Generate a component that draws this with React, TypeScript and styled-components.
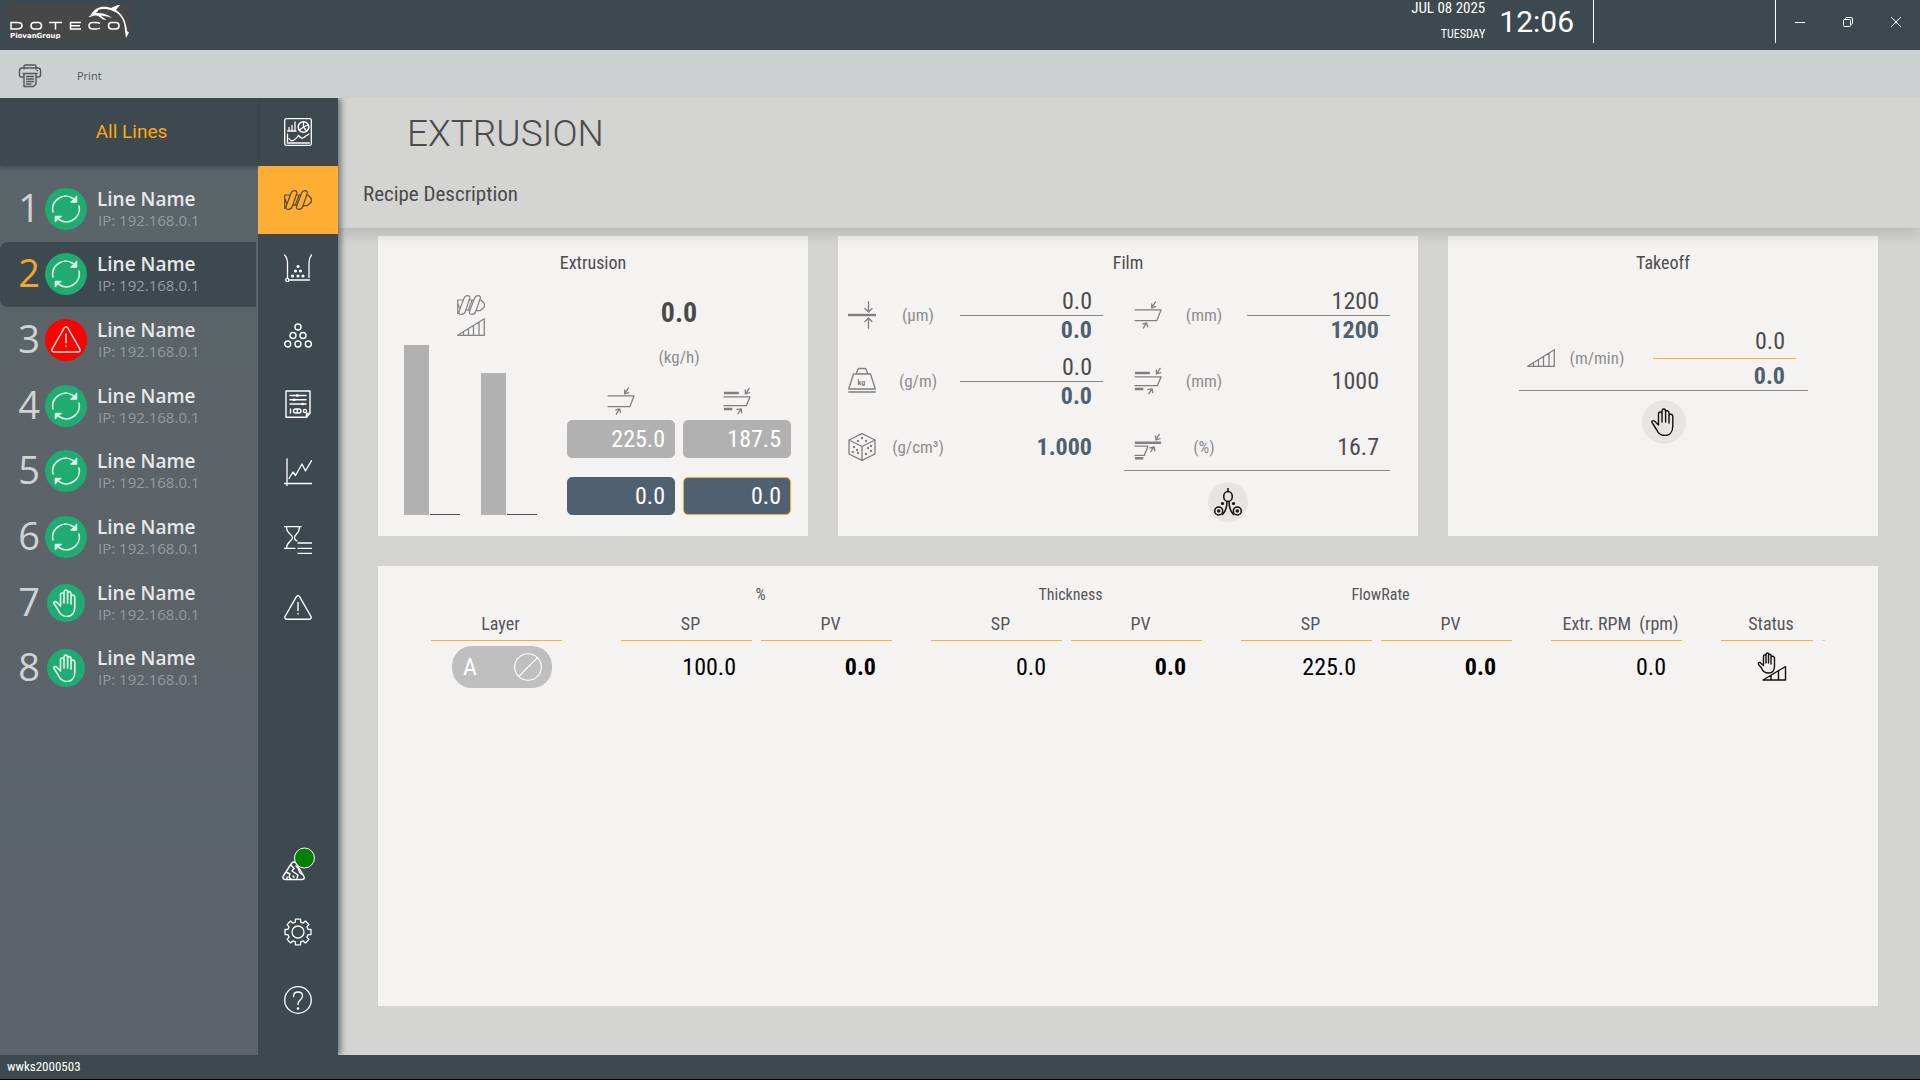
import React from "react";
import styled, { createGlobalStyle } from "styled-components";

const color = {
  dark: "#3d494e",
  accent: "#ffad33",
  page: "#d4d4d2",
  card: "#f5f3f2",
  text: "#4b4b4d",
  muted: "#8c8d90",
  steel: "#4f6071",
  bar: "#b1b1b1",
};

const condensed = `"Roboto Condensed", Roboto, "Liberation Sans", sans-serif`;
const regular = `Roboto, "Liberation Sans", sans-serif`;
const humanist = `"Open Sans", "Noto Sans", sans-serif`;

const GlobalStyle = createGlobalStyle`
  * { box-sizing: border-box; }
  body { margin: 0; background: ${color.page}; }
  button, input { font: inherit; color: inherit; }
  button { padding: 0; border: 0; background: none; cursor: pointer; }
  h1, h2, p, ul { margin: 0; padding: 0; font-weight: 400; }
  ul { list-style: none; }
  svg { display: block; flex: none; }
`;

const Shell = styled.div`
  display: flex;
  flex-direction: column;
  min-height: 100vh;
  font-family: ${condensed};
  color: ${color.text};
`;

/* ---------- title bar ---------- */

const TitleBar = styled.header`
  display: flex;
  justify-content: space-between;
  height: 50px;
  padding-left: 10px;
  background: ${color.dark};
  color: #fff;
`;

const Logo = styled.div`
  width: 120px;
  height: 35px;
  margin-top: 4px;
  background: #474747;
`;

const TitleRight = styled.div`
  display: flex;
  align-items: flex-start;
`;

const DateBlock = styled.div`
  display: flex;
  flex-direction: column;
  gap: 10px;
  text-align: right;
  font-size: 15px;
  line-height: 16px;
`;

const Weekday = styled.span`
  font-size: 12px;
`;

const Clock = styled.time`
  padding: 0 19px 0 14px;
  font-family: ${regular};
  font-size: 30px;
  line-height: 44px;
`;

const TitleSlot = styled.div`
  width: 183px;
  height: 43px;
  border: solid #fff;
  border-width: 0 1px;
`;

const WindowButton = styled.button`
  display: flex;
  align-items: center;
  justify-content: center;
  width: 48px;
  height: 44px;
`;

/* ---------- toolbar ---------- */

const Toolbar = styled.div`
  display: flex;
  align-items: center;
  height: 48px;
  padding: 4px 0 0 18px;
  background: #cbd0d0;
`;

const PrintButton = styled.button`
  display: flex;
  align-items: center;
  gap: 35px;
  color: #55565a;
  font-family: ${humanist};
  font-size: 11px;
  line-height: 16px;
`;

/* ---------- body ---------- */

const Body = styled.div`
  display: flex;
  flex: 1;
  overflow: hidden;
`;

const Sidebar = styled.aside`
  position: relative;
  z-index: 3;
  width: 258px;
  background: linear-gradient(#5b6468, #5c636b);
`;

const SidebarTitle = styled.h2`
  padding-left: 5px;
  background: ${color.dark};
  box-shadow: 0 2px 3px rgba(40, 50, 56, 0.4);
  color: #ffa70f;
  font-family: ${regular};
  font-size: 19px;
  line-height: 68px;
  text-align: center;
`;

const LineList = styled.ul`
  display: grid;
  grid-template-rows: repeat(8, 1fr);
  height: 525px;
  margin: 10px 2px 0 0;
`;

const LineButton = styled.button<{ $selected?: boolean }>`
  display: grid;
  grid-template-columns: 45px 42px 1fr;
  align-items: center;
  width: 100%;
  height: 100%;
  border-radius: 8px 0 0 8px;
  background: ${(p) => (p.$selected ? color.dark : "transparent")};
  font-family: ${humanist};
  text-align: left;
`;

const LineNumber = styled.span<{ $selected?: boolean }>`
  padding: 0 5px 4px 0;
  color: ${(p) => (p.$selected ? "#f0a532" : "#d0d2d3")};
  font-size: 38px;
  line-height: 44px;
  text-align: right;
`;

const StateDisc = styled.span<{ $kind: LineState }>`
  display: flex;
  align-items: center;
  justify-content: center;
  justify-self: center;
  width: ${(p) => (p.$kind === "manual" ? 38 : 42)}px;
  height: ${(p) => (p.$kind === "manual" ? 38 : 42)}px;
  border-radius: 50%;
  background: ${(p) => (p.$kind === "alarm" ? "#fe0000" : "#20ab72")};
  color: #d9f0e5;
`;

const LineText = styled.span`
  display: flex;
  flex-direction: column;
  padding-left: 10px;
  color: #e6e8e9;
  font-size: 19px;
  font-weight: 600;
  line-height: 22px;
`;

const LineAddress = styled.span`
  padding-left: 1px;
  color: #959b9e;
  font-size: 15px;
  font-weight: 400;
  line-height: 20px;
`;

const Rail = styled.nav`
  position: relative;
  z-index: 2;
  display: flex;
  flex-direction: column;
  justify-content: space-between;
  width: 80px;
  padding-bottom: 21px;
  background: ${color.dark};
  box-shadow: 3px 0 6px rgba(0, 0, 0, 0.45);
`;

const RailButton = styled.button<{ $active?: boolean }>`
  display: flex;
  align-items: center;
  justify-content: center;
  width: 80px;
  height: 68px;
  background: ${(p) => (p.$active ? color.accent : "transparent")};
  color: ${(p) => (p.$active ? "#5a4a35" : "#fff")};
`;

/* ---------- page ---------- */

const Main = styled.main`
  flex: 1;
  min-width: 0;
`;

const PageHeader = styled.div`
  position: relative;
  z-index: 1;
  height: 130px;
  background: ${color.page};
  box-shadow: 0 6px 14px rgba(0, 0, 0, 0.14);
`;

const PageTitle = styled.h1`
  padding: 15px 0 0 69px;
  font-family: ${regular};
  font-size: 37px;
  font-weight: 300;
  line-height: 42px;
`;

const Recipe = styled.p`
  padding: 27px 0 0 25px;
  font-size: 21px;
  line-height: 24px;
`;

const Content = styled.div`
  display: grid;
  grid-template-columns: 43fr 58fr 43fr;
  gap: 30px;
  padding: 8px 42px 49px 40px;
`;

const Card = styled.section<{ $wide?: boolean }>`
  grid-column: ${(p) => (p.$wide ? "1 / -1" : "auto")};
  min-width: 0;
  min-height: ${(p) => (p.$wide ? 440 : 300)}px;
  padding-top: 17px;
  background: ${color.card};
`;

const CardTitle = styled.h2`
  font-size: 18px;
  line-height: 20px;
  text-align: center;
`;

/* ---------- extrusion card ---------- */

const ExtrusionBody = styled.div`
  display: flex;
  justify-content: space-between;
  padding: 22px 17px 0 26px;
`;

const BarPanel = styled.div`
  display: flex;
  flex-direction: column;
  align-items: center;
  gap: 3px;
  color: #848486;
`;

const Bars = styled.div`
  display: flex;
  align-items: flex-end;
  gap: 21px;
  height: 176px;
`;

const BarPair = styled.div`
  display: flex;
  align-items: flex-end;
  gap: 1px;
`;

const SetBar = styled.div`
  width: 25px;
  background: ${color.bar};
`;

const ActualBar = styled.div`
  width: 30px;
  height: 1px;
  background: #4b4f5c;
`;

const RatePanel = styled.div`
  display: flex;
  flex-direction: column;
  align-items: center;
`;

const RateValue = styled.p`
  padding-bottom: 16px;
  font-size: 28px;
  font-weight: 700;
  line-height: 36px;
`;

const Unit = styled.p`
  color: ${color.muted};
  font-size: 17px;
  line-height: 20px;
  text-align: center;
`;

const FieldGrid = styled.div`
  display: grid;
  grid-template-columns: 108px 108px;
  gap: 19px 8px;
  padding-top: 20px;
`;

const FieldColumn = styled.label`
  display: flex;
  flex-direction: column;
  align-items: center;
  gap: 5px;
  color: #7f7f81;
`;

const Field = styled.input<{ $actual?: boolean; $marked?: boolean }>`
  width: 108px;
  height: 38px;
  padding: 0 9px;
  border: 1px solid
    ${(p) => (p.$marked ? color.accent : p.$actual ? color.steel : color.bar)};
  border-radius: 5px;
  background: ${(p) => (p.$actual ? color.steel : color.bar)};
  color: #fff;
  font-size: 24px;
  text-align: right;
`;

/* ---------- measurements ---------- */

const FilmBody = styled.div`
  display: grid;
  grid-template-columns: 254fr 267fr;
  gap: 21px;
  padding: 19px 28px 0 10px;
`;

const TakeoffBody = styled.div`
  display: flex;
  flex-direction: column;
  padding: 62px 70px 0 71px;
`;

const Measures = styled.div<{ $ruled?: boolean; $pad?: string }>`
  display: flex;
  flex-direction: column;
  gap: 20px;
  padding: ${(p) => p.$pad || "0"};
  border-bottom: ${(p) => (p.$ruled ? "1px solid #88888a" : "0")};
`;

const MeasureRow = styled.div`
  display: grid;
  grid-template-columns: 28px 84px 1fr;
  grid-template-rows: 46px;
  align-items: center;
  color: #7f7f81;
`;

const Stack = styled.div<{ $marked?: boolean; $tall?: boolean }>`
  justify-self: end;
  width: 143px;
  color: ${color.text};
  font-size: 24px;
  line-height: ${(p) => (p.$tall ? 34 : 28)}px;
  text-align: right;

  span {
    display: block;
    padding-right: 11px;
  }

  span + span {
    border-top: 1px solid ${(p) => (p.$marked ? color.accent : "#88888a")};
  }
`;

const Actual = styled.span`
  color: ${color.steel};
  font-weight: 700;
`;

const RoundButton = styled.button<{ $size: number }>`
  display: flex;
  align-items: center;
  justify-content: center;
  width: ${(p) => p.$size}px;
  height: ${(p) => p.$size}px;
  border-radius: 50%;
  background: #e6e5e2;
  color: #111;
`;

const FilmAction = styled.div`
  padding: 11px 0 0 84px;
`;

const TakeoffAction = styled.div`
  display: flex;
  justify-content: center;
  padding-top: 9px;
`;

/* ---------- layer table ---------- */

const TableWrap = styled.div`
  padding: 2px 53px 0;
`;

const LayerTable = styled.table`
  width: 100%;
  border-collapse: collapse;
  table-layout: fixed;
  color: #55565a;
  font-size: 18px;

  th,
  td {
    padding: 0;
    font-weight: 400;
  }
`;

const Col = styled.col<{ $w: number }>`
  width: ${(p) => p.$w}px;
`;

const GroupLabel = styled.div`
  padding: 0 31px 0 0;
  font-size: 16px;
  line-height: 20px;
  text-align: center;
`;

const HeadLabel = styled.div<{ $gap: number }>`
  margin-right: ${(p) => p.$gap}px;
  padding: 2px 0 0 8px;
  border-bottom: 1px solid ${color.accent};
  line-height: 33px;
  text-align: center;
  white-space: pre;
`;

const StubLabel = styled.div`
  height: 36px;
  border-bottom: 1px solid #cfcfd0;
`;

const CellValue = styled.div<{ $gap: number; $strong?: boolean }>`
  padding: 1px ${(p) => p.$gap + 16}px 0 0;
  color: #000;
  font-size: 24px;
  font-weight: ${(p) => (p.$strong ? 700 : 400)};
  line-height: 51px;
  text-align: right;
`;

const LayerPill = styled.button`
  display: flex;
  align-items: center;
  justify-content: space-between;
  width: 100px;
  height: 42px;
  margin-left: 21px;
  padding: 0 10px 0 11px;
  border-radius: 20px;
  background: #bfbfbf;
  color: #fff;
  font-size: 24px;
`;

const StatusIcon = styled.div`
  display: flex;
  justify-content: center;
  color: #111;
`;

/* ---------- footer ---------- */

const StatusBar = styled.footer`
  height: 25px;
  padding-left: 7px;
  border-bottom: 1px solid #000;
  background: ${color.dark};
  color: #fff;
  font-size: 13px;
  line-height: 24px;
`;

/* ---------- drawings ---------- */

type IconProps = { w?: number; h?: number; box?: string; sw?: number; children: React.ReactNode };

const Icon = ({ w = 28, h = 28, box, sw = 1.3, children }: IconProps) => (
  <svg
    width={w}
    height={h}
    viewBox={box || `0 0 ${w} ${h}`}
    fill="none"
    stroke="currentColor"
    strokeWidth={sw}
    strokeLinecap="round"
    strokeLinejoin="round"
    aria-hidden="true"
  >
    {children}
  </svg>
);

const LogoDrawing = () => (
  <svg width="120" height="35" viewBox="0 0 120 35" role="img" aria-label="Doteco PiovanGroup">
    <g fill="none" stroke="#fff" strokeWidth="1.5">
      <path d="M1 18.500H7.500Q12 18.500 12 21.500T7.500 25H1Z" />
      <rect x="21" y="18.500" width="10.500" height="6.500" rx="3.200" />
      <path d="M39 18.500H52M45.500 18.500V25.500" />
      <path d="M71 18.500H60.500V25H71M60.500 21.700H70" />
      <path d="M90 19.500Q88.500 18.500 86 18.500H83Q79 18.500 79 21.700T83 25H86Q88.500 25 90 24" />
      <rect x="98.500" y="18.500" width="10.500" height="6.500" rx="3.200" />
    </g>
    <path
      fill="#fff"
      d="M78 13C82 12 81 8 86 5C91 2 97 2.500 101 4C104 3 106 1 110 1C109 3 107 4 106 6C112 10 116 16 117 27L119 28.500L116 34L115 27C115 18 111 10 104 7.500C97 4 90 5 86 9C92 9 98 10 102 14C97 12 93 12 91 11.500C93 14 96 15 96 16C91 15.500 90 12 86 11.500C83 11 81 13.500 78 13Z"
    />
    <path fill="#474747" d="M88 6C93 4 99 5 104 9C99 7.500 93 6 88 8Z" />
    <text x="0" y="33.500" fill="#fff" fontFamily="DejaVu Sans, sans-serif" fontWeight="700" fontSize="7">
      PiovanGroup
    </text>
  </svg>
);

const Printer = () => (
  <Icon w={24} h={24} sw={1.4}>
    <path d="M6 5V2.500Q6 1 7.500 1H16.500Q18 1 18 2.500V5M6 13H3.500Q1.500 13 1.500 11V6.500Q1.500 4 4 4H20Q22.500 4 22.500 6.500V11Q22.500 13 20.500 13H18M5 9.500H19M6 9.500V22.500H15.500L18 20V9.500M8.500 12.500H15.500M8.500 15H15.500M8.500 17.500H15.500M8.500 20H13M19 6.500H19.500" />
  </Icon>
);

const Cycle = () => (
  <Icon w={30} h={30} sw={1.6}>
    <path d="M2 18A13 13 0 0 1 22 4.500M25.500 2.500V8H20M28 12A13 13 0 0 1 8 25.500M4.500 27.500V22.500H10" />
    <path fill="currentColor" d="M25 3.500V7.500H21ZM5 26.500V23H9Z" />
  </Icon>
);

const warningPath =
  "M12.300 2.800Q14 0.500 15.700 2.800L27 22.500Q27.800 25 25.300 25.200H2.700Q0.200 25 1 22.500ZM14 8.500V16.500M14 19.500V20";

const Warning = ({ w = 28 }: { w?: number }) => (
  <Icon w={w} h={w} box="0 0 28 28" sw={1.4}>
    <path d={warningPath} />
  </Icon>
);

const handPath =
  "M8.500 17V6Q8.500 4 10.200 4T12 6V14M12 6V3.500Q12 1 13.800 1T15.600 3.500V14M15.600 5V4.500Q15.600 2.500 17.300 2.700T19 5V15M19 7.500Q19.200 6 21 6.200T22.800 8.200V18C22.800 24 19.500 27.500 15 27.500C10.500 27.500 8 25 6.500 21.500L3 16Q0.800 13.500 2.500 12.800T5.500 14L8.500 17";

const Hand = ({ w = 28, sw = 1.4 }: { w?: number; sw?: number }) => (
  <Icon w={w} h={w} box="0 0 28 28" sw={sw}>
    <path d={handPath} />
  </Icon>
);

const flightPath =
  "M2 16.500L7 3.200Q8 0.700 10.600 0.700Q13.500 0.700 12.700 3.500L8.300 16.500Q7.300 19.300 4.500 19.300Q1.300 19.300 2 16.500Z";

const Screw = () => (
  <Icon w={28} h={20} sw={1.2}>
    <path d={flightPath} />
    <path d={flightPath} transform="translate(10.5 0)" />
    <path d="M6.300 5H0.700V18.500L2 16.500M0.700 8L2.500 13M12.300 5H16.800M8.800 15.200H12.800M15 5.500L11.300 15M23.200 5H24L27.300 8.500V12L23 15.700H19" />
  </Icon>
);

const Ramp = () => (
  <Icon w={28} h={18} sw={1.3}>
    <path d="M0.700 17.300L27.300 0.700V17.300ZM6.500 14V17M11.500 11V17M16.500 8V17M22 4.500V17" />
  </Icon>
);

const Trim = () => (
  <Icon box="0 0 30 30" sw={1.4}>
    <path d="M1 9.500H29L24.500 21H1M23 1L19 7M19 3V7.500L23 6M10 29L13 24M9.500 24.500L13.500 23.500L14.500 27.500" />
  </Icon>
);

const TrimDouble = () => (
  <Icon box="0 0 30 30" sw={1.4}>
    <path d="M1 10.500H29L25 20H1M28 1.500L24.500 7M24 3V7.500L28.500 6M16 28.500L19 24M15 24L19.500 23.500L20 27.500" />
    <path strokeWidth="2.600" strokeLinecap="butt" d="M1 6.500H17M1 23.500H10" />
  </Icon>
);

const TrimPercent = () => (
  <Icon box="0 0 30 30" sw={1.4}>
    <path d="M1 14H15L11 24H1M27 1.500L24 6.500M23 3L23.500 7.500L28 6M18 20L21 15.500M17 16L21.500 15L22.500 19" />
    <path strokeWidth="2.800" strokeLinecap="butt" d="M1 10.500H29M1 27H10" />
  </Icon>
);

const ThicknessIcon = () => (
  <Icon>
    <path strokeWidth="2.400" strokeLinecap="butt" d="M0 14H28" />
    <path d="M20.500 0.700V10.500M17 7.500L20.500 11L24 7.500M20.500 27.300V17.500M17 20.500L20.500 17L24 20.500" />
  </Icon>
);

const WeightIcon = () => (
  <Icon>
    <path d="M0.700 22L5.500 7H22.500L27.300 22ZM0.700 25H27.300M8.500 6.500L9.500 3Q10 1.500 11.500 1.500H16.500Q18 1.500 18.500 3L19.500 6.500" />
    <text x="9.500" y="17.500" fontSize="8" fontWeight="700" fill="currentColor" stroke="none">
      kg
    </text>
  </Icon>
);

const DensityIcon = () => (
  <Icon>
    <path d="M14 0.700L27 7V21L14 27.300L1 21V7ZM1 7L14 13.500L27 7M14 13.500V27" />
    <g fill="currentColor" stroke="none">
      {[
        [14, 5], [10, 8], [18, 8], [6, 14], [9, 17], [5, 19], [10, 20], [20, 15], [23, 18], [18, 21], [23, 13],
      ].map(([x, y]) => (
        <circle key={`${x}-${y}`} cx={x} cy={y} r="1.200" />
      ))}
    </g>
  </Icon>
);

const WinderIcon = () => (
  <Icon sw={1.5}>
    <ellipse cx="14" cy="8.500" rx="4.300" ry="5" />
    <path d="M14 0.500V3.500M13 13.500C13 20 12 23 8.500 26.500M15 13.500C15 20 16 23 19.500 26.500" />
    <circle cx="4.700" cy="23" r="4" />
    <circle cx="23.300" cy="23" r="4" />
    <circle cx="4.700" cy="23" r="1" />
    <circle cx="23.300" cy="23" r="1" />
    <g fill="currentColor" stroke="none">
      <circle cx="8.500" cy="15.500" r="1.600" />
      <circle cx="19.500" cy="15.500" r="1.600" />
    </g>
  </Icon>
);

const DashboardIcon = () => (
  <Icon>
    <rect x="0.700" y="0.700" width="26.600" height="26.600" rx="1.500" />
    <path d="M3.500 13H12M5 12.500V9.500M8 12.500V7.500M11 12.500V4M3.500 16V24.500M5 20.500Q7 24 10 22T14.500 17.500Q18 22 21 18.500L25 16" />
    <path strokeWidth="2" d="M3.500 25H25" stroke="#c9cdce" />
    <circle cx="19.500" cy="9" r="5.300" strokeWidth="1.600" />
    <path d="M19.500 9V4M19.500 9L24 7M19.500 9L15.500 12M19.500 9L22.500 13" />
  </Icon>
);

const HopperIcon = () => (
  <Icon>
    <path d="M0.500 1Q3.500 4 3.500 9V24M27.500 1Q25 4 25 9V23.500M5.500 26H25.500" />
    <circle cx="3.300" cy="26" r="1.600" />
    <g fill="currentColor" stroke="none">
      {[[14, 12.5], [11.5, 17], [16.5, 17], [8.5, 22], [14, 22], [19, 22]].map(([x, y]) => (
        <circle key={`${x}-${y}`} cx={x} cy={y} r="1.600" />
      ))}
    </g>
  </Icon>
);

const GranulesIcon = () => (
  <Icon sw={1.4}>
    {[[14, 5], [9, 13.5], [19, 13.5], [3.7, 22], [14, 22], [24.3, 22]].map(([x, y]) => (
      <circle key={`${x}-${y}`} cx={x} cy={y} r="3" />
    ))}
  </Icon>
);

const RecipeIcon = () => (
  <Icon sw={1.4}>
    <path d="M2 1H26V23L22.500 27.300H2ZM22.500 27V23.500H26M6 5.500H22M6 9.700H22M6 14H22M6.500 19V23M9.500 21A2 2 0 0 1 13.500 21A2 2 0 0 1 9.500 21M11 19H15A2 2 0 0 1 15 23H11" />
    <circle cx="21" cy="21" r="1.600" />
    <path strokeWidth="2.600" d="M13 5.500H13.500M10 9.700H10.200M18.500 14H19" />
  </Icon>
);

const TrendIcon = () => (
  <Icon>
    <path d="M3 0.700V27.500M0.500 25.500H27.500M5 20.500L9 14L11.500 17.500L18 6L21.500 13L27.500 2.700" />
  </Icon>
);

const ReportIcon = () => (
  <Icon>
    <path d="M0.700 0.700H17M2.500 1C2.500 8 8.500 8 8.500 11.500C8.500 15 2.500 16 2.500 22M15.500 1C15.500 8 10.500 8 10.500 11.500Q10.500 14 13 15M0.500 22.300H11M14 17H27.500M14 22.300H27.500M14 27.300H27.500" />
  </Icon>
);

const HelpIcon = () => (
  <Icon>
    <circle cx="14" cy="14" r="13.300" />
    <path d="M9.500 10.500Q9.500 6 14 6T18.500 10Q18.500 12 16.200 14T14 18.500" />
    <circle cx="14" cy="22.500" r="0.700" fill="currentColor" />
  </Icon>
);

const GearIcon = () => {
  const points: string[] = [];
  for (let i = 0; i < 8; i += 1) {
    const at = (deg: number, r: number) => {
      const a = ((i * 45 + deg) * Math.PI) / 180;
      return `${(14 + r * Math.sin(a)).toFixed(2)} ${(14 - r * Math.cos(a)).toFixed(2)}`;
    };
    points.push(at(-15, 10.3), at(-11, 13.2), at(11, 13.2), at(15, 10.3));
  }
  return (
    <Icon>
      <path d={`M${points.join("L")}Z`} />
      <circle cx="14" cy="14" r="6" />
    </Icon>
  );
};

const MaterialIcon = () => (
  <Icon w={36} h={36} sw={1.4}>
    <path d="M11 18L3 30.500Q2.500 33.300 5 33.500H22Q25 33.500 24 30.500L16 17Q13.500 14.500 11 18ZM11 19L14 22.500L12 25L15 27L18 29L17 32M6 26L10 28L9 31L11 33M16 20L18 22L20 27L23 29M7 31V33M13 30L14 31" />
    <circle cx="24.500" cy="12" r="10" fill="#008000" strokeWidth="1" />
  </Icon>
);

const HandRamp = () => (
  <Icon w={30} h={30} sw={1.4}>
    <path d="M6.500 12V4.500Q6.500 2.500 8 3T9 5V11M9 5V2.500Q9 1 10.500 1T11.500 3V11M11.500 3Q12.500 1.500 14 3V12M14 5Q15.500 3.500 17.500 5.500V14C17.500 18.500 15 21 11.500 21C8 21 5.500 19 4.500 16L1.500 12.500Q1 10 3 10.500L6.500 13.500" />
    <path d="M6 28L28.500 14.500V28ZM14 23.500V28M21.500 19V28" />
  </Icon>
);

const OffCircle = () => (
  <Icon sw={1.1}>
    <circle cx="14" cy="14" r="13.300" />
    <path d="M23.500 4.700L4.700 23.500" />
  </Icon>
);

/* ---------- data ---------- */

type LineState = "running" | "alarm" | "manual";

const lines: LineState[] = ["running", "running", "alarm", "running", "running", "running", "manual", "manual"];

const stateDrawing: Record<LineState, React.ReactNode> = {
  running: <Cycle />,
  alarm: <Warning w={30} />,
  manual: <Hand w={28} sw={1.7} />,
};

const railTop: [string, React.ReactNode][] = [
  ["Overview", <DashboardIcon />],
  ["Extrusion", <Screw />],
  ["Hopper", <HopperIcon />],
  ["Granules", <GranulesIcon />],
  ["Recipes", <RecipeIcon />],
  ["Trends", <TrendIcon />],
  ["Reports", <ReportIcon />],
  ["Alarms", <Warning />],
];

const railBottom: [string, React.ReactNode][] = [
  ["Materials", <MaterialIcon />],
  ["Settings", <GearIcon />],
  ["Help", <HelpIcon />],
];

const CHART_HEIGHT = 170;
const MAX_RATE = 225;

const rates = [
  { name: "Gross rate", set: 225, setText: "225.0", actual: "0.0", icon: <Trim /> },
  { name: "Net rate", set: 187.5, setText: "187.5", actual: "0.0", icon: <TrimDouble />, marked: true },
];

const columns = [
  { label: "SP", gap: 9 },
  { label: "PV", gap: 39 },
  { label: "SP", gap: 9 },
  { label: "PV", gap: 39 },
  { label: "SP", gap: 9 },
  { label: "PV", gap: 39 },
  { label: "Extr. RPM  (rpm)", gap: 39 },
];

const layerValues = ["100.0", "0.0", "0.0", "0.0", "225.0", "0.0", "0.0"];

type MeasureProps = {
  icon: React.ReactNode;
  unit: string;
  set?: string;
  actual?: string;
  marked?: boolean;
  tall?: boolean;
};

const Measure = ({ icon, unit, set, actual, marked, tall }: MeasureProps) => (
  <MeasureRow>
    {icon}
    <Unit>{unit}</Unit>
    <Stack $marked={marked} $tall={tall}>
      {set && <span>{set}</span>}
      {actual && <Actual>{actual}</Actual>}
    </Stack>
  </MeasureRow>
);

export default function App() {
  return (
    <Shell>
      <GlobalStyle />
      <TitleBar>
        <Logo>
          <LogoDrawing />
        </Logo>
        <TitleRight>
          <DateBlock>
            <span>JUL 08 2025</span>
            <Weekday>TUESDAY</Weekday>
          </DateBlock>
          <Clock>12:06</Clock>
          <TitleSlot />
          <WindowButton aria-label="Minimize">
            <Icon w={10} h={10} sw={1}>
              <path d="M0 5.500H10" />
            </Icon>
          </WindowButton>
          <WindowButton aria-label="Restore">
            <Icon w={10} h={10} sw={1}>
              <rect x="0.500" y="2.500" width="7" height="7" rx="1" />
              <path d="M2.500 2.500V1.500Q2.500 0.500 3.500 0.500H8Q9.500 0.500 9.500 2V6.500Q9.500 7.500 7.500 7.500" />
            </Icon>
          </WindowButton>
          <WindowButton aria-label="Close">
            <Icon w={10} h={10} sw={1}>
              <path d="M0 0L10 10M10 0L0 10" />
            </Icon>
          </WindowButton>
        </TitleRight>
      </TitleBar>

      <Toolbar>
        <PrintButton>
          <Printer />
          Print
        </PrintButton>
      </Toolbar>

      <Body>
        <Sidebar>
          <SidebarTitle>All Lines</SidebarTitle>
          <LineList>
            {lines.map((state, i) => (
              <li key={i}>
                <LineButton $selected={i === 1}>
                  <LineNumber $selected={i === 1}>{i + 1}</LineNumber>
                  <StateDisc $kind={state}>{stateDrawing[state]}</StateDisc>
                  <LineText>
                    Line Name
                    <LineAddress>IP: 192.168.0.1</LineAddress>
                  </LineText>
                </LineButton>
              </li>
            ))}
          </LineList>
        </Sidebar>

        <Rail>
          <div>
            {railTop.map(([name, icon]) => (
              <RailButton key={name} aria-label={name} $active={name === "Extrusion"}>
                {icon}
              </RailButton>
            ))}
          </div>
          <div>
            {railBottom.map(([name, icon]) => (
              <RailButton key={name} aria-label={name}>
                {icon}
              </RailButton>
            ))}
          </div>
        </Rail>

        <Main>
          <PageHeader>
            <PageTitle>EXTRUSION</PageTitle>
            <Recipe>Recipe Description</Recipe>
          </PageHeader>

          <Content>
            <Card>
              <CardTitle>Extrusion</CardTitle>
              <ExtrusionBody>
                <BarPanel>
                  <Screw />
                  <Ramp />
                  <Bars>
                    {rates.map((rate) => (
                      <BarPair key={rate.name}>
                        <SetBar style={{ height: Math.round((rate.set / MAX_RATE) * CHART_HEIGHT) }} />
                        <ActualBar />
                      </BarPair>
                    ))}
                  </Bars>
                </BarPanel>
                <RatePanel>
                  <RateValue>0.0</RateValue>
                  <Unit>(kg/h)</Unit>
                  <FieldGrid>
                    {rates.map((rate) => (
                      <FieldColumn key={rate.name}>
                        {rate.icon}
                        <Field readOnly aria-label={rate.name} value={rate.setText} />
                      </FieldColumn>
                    ))}
                    {rates.map((rate) => (
                      <Field
                        key={rate.name}
                        aria-label={`${rate.name} actual`}
                        defaultValue={rate.actual}
                        $actual
                        $marked={rate.marked}
                      />
                    ))}
                  </FieldGrid>
                </RatePanel>
              </ExtrusionBody>
            </Card>

            <Card>
              <CardTitle>Film</CardTitle>
              <FilmBody>
                <Measures>
                  <Measure icon={<ThicknessIcon />} unit="(μm)" set="0.0" actual="0.0" />
                  <Measure icon={<WeightIcon />} unit="(g/m)" set="0.0" actual="0.0" />
                  <Measure icon={<DensityIcon />} unit="(g/cm³)" actual="1.000" />
                </Measures>
                <div>
                  <Measures $ruled $pad="0 0 0 10px">
                    <Measure icon={<Trim />} unit="(mm)" set="1200" actual="1200" />
                    <Measure icon={<TrimDouble />} unit="(mm)" set="1000" />
                    <Measure icon={<TrimPercent />} unit="(%)" set="16.7" />
                  </Measures>
                  <FilmAction>
                    <RoundButton $size={40} aria-label="Winder">
                      <WinderIcon />
                    </RoundButton>
                  </FilmAction>
                </div>
              </FilmBody>
            </Card>

            <Card>
              <CardTitle>Takeoff</CardTitle>
              <TakeoffBody>
                <Measures $ruled $pad="0 12px 9px 8px">
                  <Measure icon={<Ramp />} unit="(m/min)" set="0.0" actual="0.0" marked tall />
                </Measures>
                <TakeoffAction>
                  <RoundButton $size={44} aria-label="Manual mode">
                    <Hand />
                  </RoundButton>
                </TakeoffAction>
              </TakeoffBody>
            </Card>

            <Card $wide>
              <TableWrap>
                <LayerTable>
                  <colgroup>
                    {[190, 140, 170, 140, 170, 140, 170, 170, 101, 3].map((w, i) => (
                      <Col key={i} $w={w} />
                    ))}
                  </colgroup>
                  <thead>
                    <tr>
                      <td />
                      {["%", "Thickness", "FlowRate"].map((name) => (
                        <th key={name} colSpan={2} scope="colgroup">
                          <GroupLabel>{name}</GroupLabel>
                        </th>
                      ))}
                      <td />
                      <td />
                      <td />
                    </tr>
                    <tr>
                      <th scope="col">
                        <HeadLabel $gap={59}>Layer</HeadLabel>
                      </th>
                      {columns.map((col, i) => (
                        <th key={i} scope="col">
                          <HeadLabel $gap={col.gap}>{col.label}</HeadLabel>
                        </th>
                      ))}
                      <th scope="col">
                        <HeadLabel $gap={9}>Status</HeadLabel>
                      </th>
                      <td>
                        <StubLabel />
                      </td>
                    </tr>
                  </thead>
                  <tbody>
                    <tr>
                      <td>
                        <LayerPill>
                          A
                          <OffCircle />
                        </LayerPill>
                      </td>
                      {layerValues.map((value, i) => (
                        <td key={i}>
                          <CellValue $gap={columns[i].gap} $strong={columns[i].label === "PV"}>
                            {value}
                          </CellValue>
                        </td>
                      ))}
                      <td>
                        <StatusIcon>
                          <HandRamp />
                        </StatusIcon>
                      </td>
                      <td />
                    </tr>
                  </tbody>
                </LayerTable>
              </TableWrap>
            </Card>
          </Content>
        </Main>
      </Body>

      <StatusBar>wwks2000503</StatusBar>
    </Shell>
  );
}
